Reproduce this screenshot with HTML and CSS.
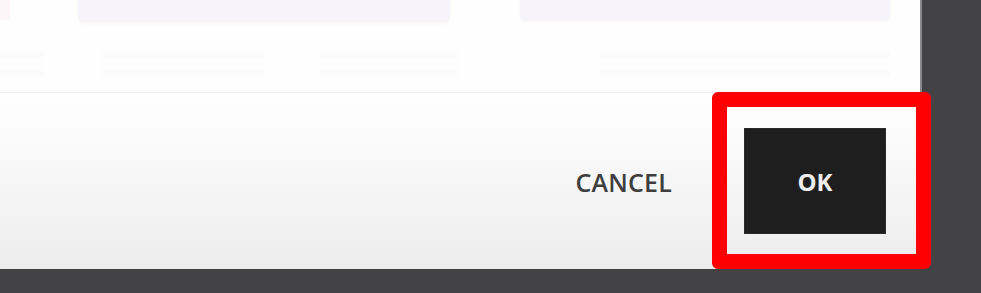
FILE: index.html
```html
<!DOCTYPE html>
<html lang="en">
<head>
<meta charset="utf-8">
<title>Dialog</title>
<link rel="stylesheet" href="styles.css">
</head>
<body>
<div class="screen">
  <div class="dialog">
    <div class="content">
      <div class="fields">
        <div class="edge-mark"></div>
        <div class="field field-a"></div>
        <div class="field field-b"></div>
      </div>
      <div class="rows">
        <div class="row"></div>
        <div class="row"></div>
      </div>
    </div>
    <div class="footer">
      <button class="btn btn-cancel">CANCEL</button>
      <button class="btn btn-ok">OK</button>
    </div>
  </div>
  <div class="highlight"></div>
</div>
</body>
</html>
```

FILE: styles.css
```css
html, body {
  margin: 0;
  padding: 0;
}
body {
  background: #434345;
  width: 981px;
  height: 293px;
  overflow: hidden;
  font-family: "Open Sans", "Noto Sans", sans-serif;
}
.screen {
  position: relative;
  width: 981px;
  height: 293px;
}
.dialog {
  width: 920px;
  height: 269px;
  background: #ffffff;
  border-right: 2px solid #8a8a8c;
  display: flex;
  flex-direction: column;
}
.content {
  height: 92px;
  border-bottom: 1px solid #f0f0f2;
  display: flex;
  flex-direction: column;
  background: #fefefe;
}
.fields {
  display: flex;
  height: 22px;
}
.edge-mark {
  width: 10px;
  height: 20px;
  background: #fdf6f9;
}
.field {
  background: #f6f4fa;
  border-radius: 0 0 5px 5px;
  box-shadow: 0 2px 3px rgba(120, 110, 150, 0.05);
}
.field-a {
  margin-left: 68px;
  width: 372px;
  height: 22px;
}
.field-b {
  margin-left: 70px;
  width: 370px;
  height: 20px;
}
.rows {
  margin-top: 30px;
  display: flex;
  flex-direction: column;
  gap: 12px;
}
.row {
  height: 6px;
  background: linear-gradient(90deg, #fcfcfd 0 45px, #ffffff 45px 100px, #fcfcfd 100px 265px, #ffffff 265px 320px, #fcfcfd 320px 460px, #ffffff 460px 600px, #fcfcfd 600px 890px, #ffffff 890px);
}
.footer {
  flex: 1;
  display: flex;
  justify-content: flex-end;
  align-items: center;
  padding-right: 34px;
  background: linear-gradient(180deg, #ffffff 0%, #f7f7f7 45%, #ececec 100%);
}
.btn {
  border: none;
  font-family: "Open Sans", "Noto Sans", sans-serif;
  font-weight: 600;
  cursor: pointer;
}
.btn-cancel {
  background: transparent;
  color: #3e3e3e;
  font-size: 25px;
  letter-spacing: 0.2px;
  padding: 0;
  margin-right: 72px;
  margin-top: 2px;
}
.btn-ok {
  width: 142px;
  height: 106px;
  background: #1e1e1e;
  color: #eeeeee;
  font-size: 24px;
  font-weight: 700;
  box-shadow: inset 0 0 0 1px #2a2a2a;
  padding: 0;
}
.highlight {
  position: absolute;
  left: 712px;
  top: 92px;
  width: 219px;
  height: 177px;
  box-sizing: border-box;
  border: 15px solid #ff0000;
  border-radius: 6px;
}
```
